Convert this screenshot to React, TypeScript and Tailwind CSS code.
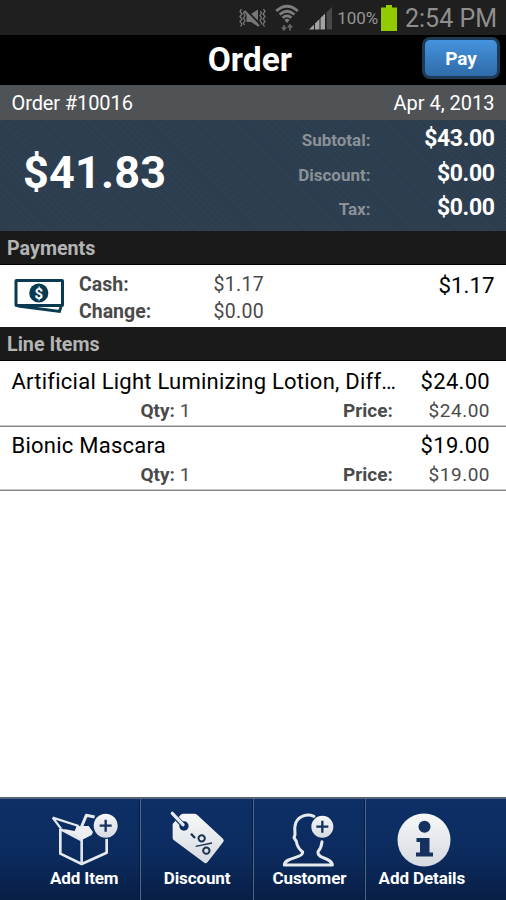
import React from "react";

const weave =
  "bg-[repeating-linear-gradient(45deg,rgba(255,255,255,0.03)_0px,rgba(255,255,255,0.03)_1px,transparent_1px,transparent_2.500px)]";

function StatusBar() {
  return (
    <div className="flex h-[35px] shrink-0 items-center justify-end bg-[#1f1f1f] pr-[9px] text-[#8f8f8f]">
      <svg className="mr-[9px] h-[20px] w-[27px]" viewBox="0 0 27 20" fill="none" stroke="#777777">
        <path d="M2.500 1L1 3.500 3 6 1 8.500 3 11 1 13.500 3 16 1.500 18.500 M5.500 3L4.500 5 6 7.500 4.500 10 6 12.500 4.500 15 5.500 17 M24.500 1L26 3.500 24 6 26 8.500 24 11 26 13.500 24 16 25.500 18.500 M21.500 3L22.500 5 21 7.500 22.500 10 21 12.500 22.500 15 21.500 17" strokeWidth="1.300" />
        <path d="M7.500 6H12L19 1.500v17L12 14H7.500z" fill="#777777" stroke="none" />
        <path d="M6.500 1.500L22 17" stroke="#1f1f1f" strokeWidth="1.800" />
        <path d="M5.500 3L20 18" strokeWidth="2" />
      </svg>
      <svg className="mr-[10px] h-[28px] w-[24px]" viewBox="0 0 24 28" fill="none" stroke="#7d7d7d" strokeWidth="2.800">
        <path d="M1.200 7Q12-2.500 22.800 7 M4.600 10.500Q12 4 19.400 10.500 M7.600 13.800Q12 10 16.400 13.800" />
        <path d="M9.500 16Q12 13.500 14.500 16L12 19z" fill="#7d7d7d" stroke="none" />
        <path d="M9 21v5 M6.800 23.300L9 25.800l2.200-2.500 M15 26.500v-5 M12.800 23.500L15 21l2.200 2.500" strokeWidth="1.700" stroke="#666666" />
      </svg>
      <svg className="mr-[4px] mt-[2px] h-[23px] w-[24px]" viewBox="0 0 24 23">
        <path d="M0 22.500L5 17.500V22.500z M6 16.500l4.500-4.500v10.500H6z M11.500 11L16 6.500v16h-4.500z" fill="#a3a3a3" />
        <path d="M17.500 5.500L23 0v22.500H17.500z" fill="#484848" />
      </svg>
      <span className="pt-[2px] text-[17px] leading-none tracking-[-0.1px] text-[#959595]">100%</span>
      <svg className="ml-[3px] mr-[8px] h-[26px] w-[16px]" viewBox="0 0 16 26">
        <path d="M5 0h6v2.500h5V26H0V2.500h5z" fill="#92cc00" />
      </svg>
      <span className="pt-px text-[25px] leading-none">2:54 PM</span>
    </div>
  );
}

function SummaryRow({ label, value }: { label: string; value: string }) {
  return (
    <div className="flex h-[34.500px] items-center justify-end">
      <span className="pt-[3px] text-[17px] font-bold text-[#8a9197]">{label}</span>
      <span className="w-[124px] text-right text-[23px] font-bold tracking-[-0.4px] text-white">{value}</span>
    </div>
  );
}

function SectionTitle({ children }: { children: string }) {
  return (
    <h2 className="flex h-[34px] shrink-0 items-center border-b border-black bg-[#1a1a1a] pl-[7px] pt-[3px] text-[19.700px] font-bold text-[#b4b4b4]">
      {children}
    </h2>
  );
}

function LineItem({ name, price }: { name: string; price: string }) {
  return (
    <li className="h-[64px] border-b border-[#858585] pl-[11.500px] pr-[16px] pt-[4px] shadow-[0_-1px_0_#c9c9c9_inset]">
      <div className="flex h-[28px] items-center justify-between text-[22px] text-black">
        <span className="whitespace-nowrap tracking-[0.24px]">{name}</span>
        <span className="tracking-[0.3px]">{price}</span>
      </div>
      <div className="flex h-[32px] items-center text-[19px] text-[#4a4a4a]">
        <span className="ml-[129px] w-[202.500px]"><b>Qty:</b> 1</span>
        <b>Price:</b>
        <span className="ml-auto tracking-[0.5px]">{price}</span>
      </div>
    </li>
  );
}

function CashIcon() {
  return (
    <svg className="mt-[13px] h-[36px] w-[50px]" viewBox="0 0 50 36">
      <path d="M4 28L45.500 33.500L47.500 27" fill="none" stroke="#083a52" strokeWidth="2.800" />
      <rect x="2" y="2.500" width="46.500" height="25" rx="0.500" fill="white" stroke="#083a52" strokeWidth="3" />
      <circle cx="24.800" cy="15" r="9.600" fill="#083a52" />
      <text x="24.800" y="20.500" textAnchor="middle" fontSize="15" fontWeight="bold" fill="white">$</text>
    </svg>
  );
}

function Plus({ x, y, r }: { x: number; y: number; r: number }) {
  return (
    <>
      <circle cx={x} cy={y} r={r + 3} fill="#0d2e64" stroke="none" />
      <circle cx={x} cy={y} r={r} fill="url(#silver)" stroke="none" />
      <path d={`M${x - 18} ${y}h36M${x} ${y - 18}v36`} stroke="#14315f" strokeWidth="7" strokeLinecap="butt" />
    </>
  );
}

function BoxIcon() {
  return (
    <svg className="ml-[2px] h-[62px] w-[78px]" viewBox="0 0 234 186" fill="none" stroke="#e6e9ee" strokeWidth="8" strokeLinejoin="round">
      <path d="M43 68V143L107 174L182 140V98 M45 70L106 102" />
      <path d="M107 98V174" stroke="#dfe4ea" />
      <path d="M20 35L98 60 M20 35L45 68" strokeWidth="7" />
      <path d="M44 49L96 70L88 77L48 63Z" fill="#0d2e64" stroke="none" />
      <path d="M92 60L128 60L141 78L137 87L109 101L84 86L60 79L54 69L86 75Z" fill="#eceef1" stroke="none" />
      <path d="M105 66L121 28L146 33" strokeWidth="9" />
      <Plus x={179} y={59} r={36} />
    </svg>
  );
}

function TagIcon() {
  return (
    <svg className="h-[62px] w-[75px]" viewBox="0 0 225 186" fill="none">
      <path d="M38 54L62 26Q66 23 71 23H102Q108 23 112 27L189 98Q194 103 189 109L143 168Q137 175 131 169L42 103Q38 100 38 95Z" fill="url(#silver)" />
      <circle cx="72" cy="60" r="14" fill="#0d2e64" />
      <path d="M38 24L68 56" stroke="#0d2e64" strokeWidth="15" strokeLinecap="round" />
      <path d="M37 22L69 56" stroke="#e6e9ed" strokeWidth="10" strokeLinecap="round" />
      <g stroke="#1b3152">
        <path d="M93 83L105 96" strokeWidth="7" />
        <circle cx="125" cy="97" r="9.500" strokeWidth="6" />
        <circle cx="139" cy="134" r="9.500" strokeWidth="6" />
        <path d="M107 121L156 111" strokeWidth="4" />
      </g>
    </svg>
  );
}

function CustomerIcon() {
  return (
    <svg className="ml-[6px] h-[62px] w-[75px]" viewBox="0 0 225 186" fill="none" stroke="#e6e9ee" strokeWidth="9" strokeLinejoin="round" strokeLinecap="round">
      <path d="M117 31C95 22 72 30 63 49C57 62 60 74 60 86L57 95L64 106C66 121 73 130 83 138C84 147 72 151 62 154C43 160 28 165 28 177H172C172 165 157 160 142 154C132 150 128 145 129 137C136 129 140 120 141 107" />
      <Plus x={142} y={62} r={33} />
    </svg>
  );
}

function InfoIcon() {
  return (
    <svg className="ml-[4px] h-[62px] w-[56px]" viewBox="0 0 56 62">
      <circle cx="28" cy="34" r="26.500" fill="url(#silver)" />
      <circle cx="28.500" cy="20.700" r="6" fill="#14315f" />
      <path d="M20.500 32H33.500V46.500H37V50.500H20V46.500H24V36H20.500Z" fill="#14315f" />
    </svg>
  );
}

function Tab({ label, first, children }: { label: string; first?: boolean; children: React.ReactNode }) {
  return (
    <button className={"flex w-[112.400px] flex-col items-center pt-[7px] " + (first ? "" : "border-l border-[#4c6688] shadow-[-1px_0_0_#071d42]")}>
      {children}
      <span className="whitespace-nowrap text-[17px] font-bold leading-[20px] tracking-[-0.1px] text-white">{label}</span>
    </button>
  );
}

export default function App() {
  return (
    <div className="flex h-[900px] w-[506px] flex-col overflow-hidden bg-white font-['Roboto',sans-serif]">
      <StatusBar />
      <header className="flex h-[50px] shrink-0 items-start justify-end bg-black pr-[6px]">
        <h1 className="mr-[130px] text-[33.500px] font-bold leading-[49px] text-white">Order</h1>
        <button className="mt-[2px] h-[42px] w-[78px] rounded-[8px] border-[3px] border-[#1d3a57] bg-linear-to-b from-[#4593df] to-[#2f6ba8] pt-[2px] text-[19px] font-bold text-white">Pay</button>
      </header>
      <div className="flex h-[35px] shrink-0 items-center justify-between bg-[#505356] px-[11.500px] text-[20px] text-white">
        <span className="tracking-[-0.1px]">Order #10016</span>
        <span>Apr 4, 2013</span>
      </div>
      <div className={"flex h-[111px] shrink-0 justify-between bg-[#2a3c4d] pl-[23px] pr-[11.500px] pt-[2px] " + weave}>
        <span className="text-[45px] font-bold leading-[102px] tracking-[0.2px] text-white">$41.83</span>
        <div>
          <SummaryRow label="Subtotal:" value="$43.00" />
          <SummaryRow label="Discount:" value="$0.00" />
          <SummaryRow label="Tax:" value="$0.00" />
        </div>
      </div>
      <SectionTitle>Payments</SectionTitle>
      <div className="flex h-[62px] shrink-0 pl-[14px] pr-[11.500px] text-[19.500px] leading-[27px] text-[#4a4a4a]">
        <div className="w-[65px]"><CashIcon /></div>
        <div className="w-[134.500px] pt-[6px] font-bold">
          <div>Cash:</div>
          <div>Change:</div>
        </div>
        <div className="pt-[6px] tracking-[0.3px]">
          <div>$1.17</div>
          <div>$0.00</div>
        </div>
        <span className="ml-auto text-[22.300px] leading-[41px] text-black">$1.17</span>
      </div>
      <SectionTitle>Line Items</SectionTitle>
      <ul className="grow pt-[2px]">
        <LineItem name="Artificial Light Luminizing Lotion, Diff…" price="$24.00" />
        <LineItem name="Bionic Mascara" price="$19.00" />
      </ul>
      <nav className="flex h-[102px] shrink-0 border-t border-[#4f6580] bg-linear-to-b from-[#0d2f66] via-[#0c2c60] to-[#081f47] pl-[28px] shadow-[0_-1px_0_#5d6670]">
        <svg className="h-0 w-0" aria-hidden="true">
          <defs>
            <linearGradient id="silver" x1="0" y1="0" x2="0" y2="1">
              <stop offset="0" stopColor="#f6f7f8" />
              <stop offset="1" stopColor="#d6dbe1" />
            </linearGradient>
          </defs>
        </svg>
        <Tab label="Add Item" first><BoxIcon /></Tab>
        <Tab label="Discount"><TagIcon /></Tab>
        <Tab label="Customer"><CustomerIcon /></Tab>
        <Tab label="Add Details"><InfoIcon /></Tab>
      </nav>
    </div>
  );
}
